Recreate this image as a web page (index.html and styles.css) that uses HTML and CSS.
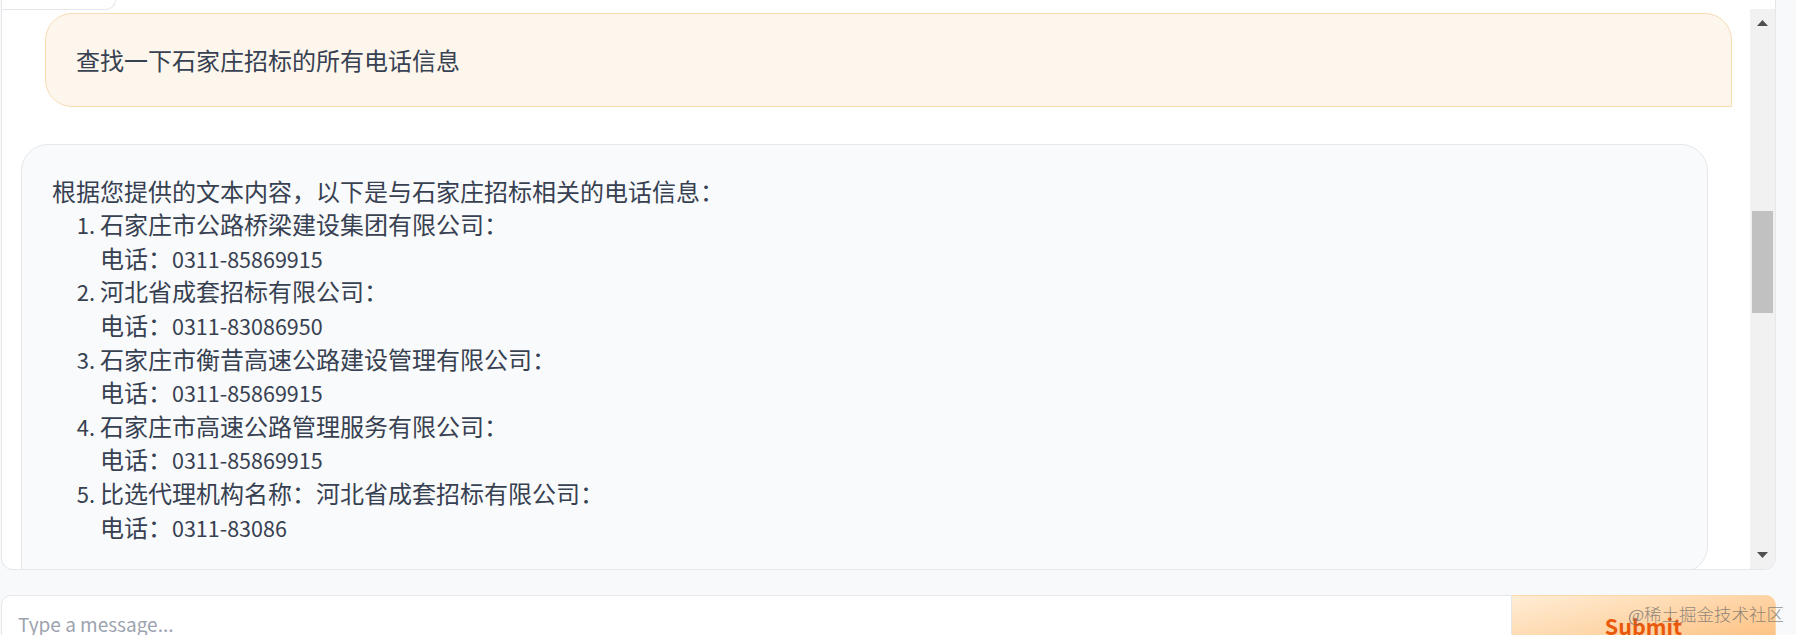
FILE: index.html
```html
<!DOCTYPE html>
<html lang="zh-CN">
<head>
  <meta charset="UTF-8" />
  <meta name="viewport" content="width=device-width, initial-scale=1.0" />
  <title>Chatbot</title>
  <link rel="stylesheet" href="styles.css">
</head>
<body>
  <div class="app">
    <div class="chatbot">
      <div class="block-label"></div>
      <div class="chat-scroll">
        <div class="messages">
          <div class="message user">查找一下石家庄招标的所有电话信息</div>
          <div class="message bot">
            <p>根据您提供的文本内容，以下是与石家庄招标相关的电话信息：</p>
            <ol>
              <li>石家庄市公路桥梁建设集团有限公司：<br>电话：<span class="tel">0311-85869915</span></li>
              <li>河北省成套招标有限公司：<br>电话：<span class="tel">0311-83086950</span></li>
              <li>石家庄市衡昔高速公路建设管理有限公司：<br>电话：<span class="tel">0311-85869915</span></li>
              <li>石家庄市高速公路管理服务有限公司：<br>电话：<span class="tel">0311-85869915</span></li>
              <li>比选代理机构名称：河北省成套招标有限公司：<br>电话：<span class="tel">0311-83086</span></li>
            </ol>
          </div>
        </div>
        <div class="scrollbar">
          <div class="sb-btn">
            <svg width="11" height="6" viewBox="0 0 11 6"><polygon points="0,6 5.5,0 11,6" fill="#505050"/></svg>
          </div>
          <div class="sb-track"><div class="sb-thumb"></div></div>
          <div class="sb-btn">
            <svg width="11" height="6" viewBox="0 0 11 6"><polygon points="0,0 11,0 5.5,6" fill="#505050"/></svg>
          </div>
        </div>
      </div>
    </div>

    <div class="composer">
      <textarea class="input" placeholder="Type a message..."></textarea>
      <button class="submit">Submit</button>
    </div>
  </div>

  <div class="watermark">@稀土掘金技术社区</div>
</body>
</html>
```

FILE: styles.css
```css
body {
  margin: 0;
  height: 635px;
  overflow: hidden;
  background-color: #f8f9fa;
  font-family: "Noto Sans CJK SC", sans-serif;
  color: #374151;
}
.app {
  padding: 0 20px 0 1px;
}
.chatbot {
  position: relative;
  height: 570px;
  box-sizing: border-box;
  background-color: #fff;
  border: 1px solid #e5e7eb;
  border-top: none;
  border-radius: 0 0 12px 12px;
  overflow: hidden;
}
.block-label {
  position: absolute;
  top: 0;
  left: 0;
  width: 113px;
  height: 9px;
  background-color: #fff;
  border-right: 1px solid #e5e7eb;
  border-bottom: 1px solid #e5e7eb;
  border-bottom-right-radius: 10px;
  z-index: 1;
}
.chat-scroll {
  display: flex;
  height: 560px;
  margin-top: 9px;
}
.messages {
  flex: 1;
  display: flex;
  flex-direction: column;
  gap: 37px;
  padding: 4px 18px 0 19px;
  overflow: hidden;
}
.message {
  width: calc(100% - 24px);
  box-sizing: border-box;
  padding: 29px 30px;
  font-size: 24px;
  line-height: 1.4;
  border: 1px solid #e5e7eb;
}
.message.user {
  align-self: flex-end;
  background-color: #fdf6ec;
  border-color: #f7dbb3;
  border-radius: 27px 27px 0 27px;
}
.message.bot {
  align-self: flex-start;
  flex-shrink: 0;
  background-color: #f9fafb;
  border-radius: 27px 27px 27px 0;
}
.message p {
  margin: 0;
}
.message ol {
  margin: 0;
  padding-left: 48px;
}
.message li::marker {
  font-size: 22px;
}
.tel {
  font-size: 21.5px;
}
.scrollbar {
  width: 25px;
  display: flex;
  flex-direction: column;
  background-color: #f1f1f1;
}
.sb-btn {
  height: 28px;
  display: flex;
  align-items: center;
  justify-content: center;
}
.sb-track {
  flex: 1;
}
.sb-thumb {
  height: 102px;
  margin: 174px 2px 0;
  background-color: #c1c1c1;
}
.composer {
  display: flex;
  margin-top: 25px;
  height: 64px;
}
.input {
  flex: 1;
  height: 64px;
  box-sizing: border-box;
  margin: 0;
  padding: 15px 16px;
  border: 1px solid #e5e7eb;
  border-radius: 10px 0 0 10px;
  background-color: #fff;
  font-family: "Noto Sans CJK SC", sans-serif;
  font-size: 19px;
  line-height: 1.4;
  resize: none;
  outline: none;
}
.input::placeholder {
  color: #9ca3af;
}
.submit {
  width: 264px;
  height: 64px;
  margin: 0;
  padding: 0 0 4px;
  border: 1px solid #fed7aa;
  border-left: none;
  border-radius: 0 10px 10px 0;
  background: linear-gradient(to bottom right, #ffedd5, #fdba74);
  color: #ea580c;
  font-family: "Noto Sans CJK SC", sans-serif;
  font-size: 21.5px;
  font-weight: 600;
  cursor: pointer;
}
.watermark {
  position: absolute;
  top: 601px;
  left: 1628px;
  white-space: nowrap;
  font-family: "Liberation Serif", "Noto Sans CJK SC", serif;
  font-size: 17.5px;
  font-weight: 300;
  color: rgba(105, 105, 105, 0.75);
  pointer-events: none;
}
```
